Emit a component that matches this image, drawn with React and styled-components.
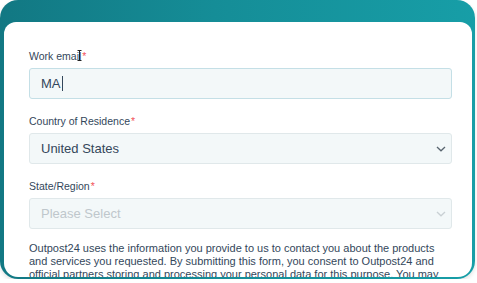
import React from "react";
import styled, { createGlobalStyle } from "styled-components";

const GlobalStyle = createGlobalStyle`
  html, body {
    margin: 0;
    padding: 0;
    background: #ffffff;
  }
  body {
    font-family: "Liberation Sans", Arial, sans-serif;
  }
`;

const Frame = styled.div`
  width: 475px;
  height: 279px;
  box-sizing: border-box;
  padding: 22px 3px 2px 4px;
  border-radius: 18px;
  background: linear-gradient(90deg, #127883 0%, #158d97 45%, #179ea7 100%);
  box-shadow: 0 2px 4px rgba(0, 0, 0, 0.12);
  overflow: hidden;
`;

const Card = styled.div`
  height: 100%;
  box-sizing: border-box;
  background: #ffffff;
  border-radius: 12px 12px 14px 14px;
  padding: 27px 20px 0 25px;
  overflow: hidden;
  display: flex;
  flex-direction: column;
`;

const Field = styled.div`
  display: flex;
  flex-direction: column;
  gap: 5px;
  margin-bottom: 15px;
`;

const Label = styled.label`
  font-size: 10.5px;
  line-height: 14px;
  color: #33475b;
  position: relative;
`;

const Required = styled.span`
  color: #f2545b;
  margin-left: 1px;
`;

const Pointer = styled.svg`
  position: absolute;
  top: 1px;
  left: 48px;
`;

const Box = styled.div`
  height: 31px;
  box-sizing: border-box;
  display: flex;
  align-items: center;
  justify-content: space-between;
  padding: 0 5px 0 11px;
  background: #f3f8f9;
  border: 1px solid ${(p) => (p.$focused ? "#c4dfe6" : "#e0e8ea")};
  border-radius: 3px;
  font-size: 13px;
  color: ${(p) => (p.$placeholder ? "#bfc7cc" : "#33475b")};
`;

const Caret = styled.span`
  display: inline-block;
  width: 1px;
  height: 15px;
  background: #33475b;
  vertical-align: -3px;
  margin-left: 1px;
`;

const Chevron = ({ faded }) => (
  <svg width="10" height="6" viewBox="0 0 10 6">
    <path
      d="M1 1 L5 4.8 L9 1"
      fill="none"
      stroke={faded ? "#c9d0d4" : "#5a6670"}
      strokeWidth="1.3"
    />
  </svg>
);

const Legal = styled.p`
  margin: -2px 0 0;
  font-size: 11px;
  line-height: 13px;
  color: #33475b;
`;

export default function App() {
  return (
    <>
      <GlobalStyle />
      <Frame>
        <Card>
          <Field>
            <Label>
              Work email<Required>*</Required>
              <Pointer width="5" height="11" viewBox="0 0 5 11">
                <path d="M0.5 0.5 H4.5 M2.5 0.5 V10.5 M0.5 10.5 H4.5" stroke="#222" strokeWidth="1" fill="none" />
              </Pointer>
            </Label>
            <Box $focused>
              <span>
                MA<Caret />
              </span>
            </Box>
          </Field>
          <Field>
            <Label>
              Country of Residence<Required>*</Required>
            </Label>
            <Box>
              <span>United States</span>
              <Chevron />
            </Box>
          </Field>
          <Field>
            <Label>
              State/Region<Required>*</Required>
            </Label>
            <Box $placeholder>
              <span>Please Select</span>
              <Chevron faded />
            </Box>
          </Field>
          <Legal>
            Outpost24 uses the information you provide to us to contact you about the products
            and services you requested. By submitting this form, you consent to Outpost24 and
            official partners storing and processing your personal data for this purpose. You may
          </Legal>
        </Card>
      </Frame>
    </>
  );
}
